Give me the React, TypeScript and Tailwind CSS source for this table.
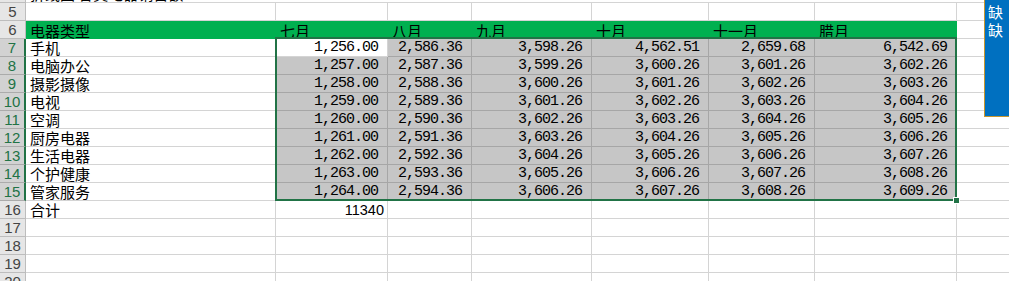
const colW = ['w-[250px]', 'w-[112px]', 'w-[84px]', 'w-[120px]', 'w-[117px]', 'w-[106px]', 'w-[142px]']

const months = ['七月', '八月', '九月', '十月', '十一月', '腊月']

const rows: { n: number; name: string; vals: string[] }[] = [
  { n: 7, name: '手机', vals: ['1,256.00', '2,586.36', '3,598.26', '4,562.51', '2,659.68', '6,542.69'] },
  { n: 8, name: '电脑办公', vals: ['1,257.00', '2,587.36', '3,599.26', '3,600.26', '3,601.26', '3,602.26'] },
  { n: 9, name: '摄影摄像', vals: ['1,258.00', '2,588.36', '3,600.26', '3,601.26', '3,602.26', '3,603.26'] },
  { n: 10, name: '电视', vals: ['1,259.00', '2,589.36', '3,601.26', '3,602.26', '3,603.26', '3,604.26'] },
  { n: 11, name: '空调', vals: ['1,260.00', '2,590.36', '3,602.26', '3,603.26', '3,604.26', '3,605.26'] },
  { n: 12, name: '厨房电器', vals: ['1,261.00', '2,591.36', '3,603.26', '3,604.26', '3,605.26', '3,606.26'] },
  { n: 13, name: '生活电器', vals: ['1,262.00', '2,592.36', '3,604.26', '3,605.26', '3,606.26', '3,607.26'] },
  { n: 14, name: '个护健康', vals: ['1,263.00', '2,593.36', '3,605.26', '3,606.26', '3,607.26', '3,608.26'] },
  { n: 15, name: '管家服务', vals: ['1,264.00', '2,594.36', '3,606.26', '3,607.26', '3,608.26', '3,609.26'] },
]

const cjk = "font-['Noto_Sans_CJK_SC',sans-serif]"
const mono = "font-['Liberation_Mono','Noto_Sans_CJK_SC',monospace]"

function RowHead({ n, active }: { n: number; active?: boolean }) {
  return (
    <div
      className={`w-[26px] h-full shrink-0 flex items-end justify-center pb-px text-[15px] leading-none font-['Liberation_Sans',sans-serif] border-b ${
        active
          ? 'bg-[#d2d2d2] text-[#217346] border-b-[#ababab] border-r-2 border-r-[#217346]'
          : 'bg-[#e6e6e6] text-[#444] border-b-[#bdbdbd] border-r border-r-[#bdbdbd]'
      }`}
    >
      {n}
    </div>
  )
}

function EmptyRow({ n }: { n: number }) {
  return (
    <div className="flex h-[18px]">
      <RowHead n={n} />
      {colW.map((w) => (
        <div key={w} className={`${w} shrink-0 border-r border-b border-[#d4d4d4]`} />
      ))}
      <div className="flex-1 border-b border-[#d4d4d4]" />
    </div>
  )
}

export default function App() {
  return (
    <div className="relative w-[1009px] h-[281px] overflow-hidden bg-white text-black">
      {/* row 4, only its bottom edge shows */}
      <div className="flex h-[3px]">
        <div className="w-[26px] shrink-0 bg-[#e6e6e6] border-r border-b border-[#bdbdbd]" />
        <div className="flex-1 overflow-hidden border-b border-[#d4d4d4]">
          <div className={`${cjk} text-[15px] leading-[16px] -mt-[14px] pl-1 whitespace-nowrap`}>
            折线图 各类电器销售额
          </div>
        </div>
      </div>

      <EmptyRow n={5} />

      {/* row 6: header */}
      <div className="flex h-[18px]">
        <RowHead n={6} />
        <div className={`${colW[0]} shrink-0 bg-[#00b050] flex items-end pl-[4px] ${cjk} text-[15px] leading-[16px]`}>
          电器类型
        </div>
        {months.map((m, i) => (
          <div
            key={m}
            className={`${colW[i + 1]} shrink-0 bg-[#00b050] flex items-end pl-[4px] ${cjk} text-[15px] leading-[16px]`}
          >
            {m}
          </div>
        ))}
        <div className="flex-1 border-b border-[#d4d4d4]" />
      </div>

      {rows.map((r, ri) => (
        <div key={r.n} className="flex h-[18px]">
          <RowHead n={r.n} active />
          <div className={`${colW[0]} shrink-0 border-r border-b border-[#d4d4d4] flex items-end pl-[4px] ${cjk} text-[15px] leading-[16px]`}>
            {r.name}
          </div>
          {r.vals.map((v, ci) => (
            <div
              key={ci}
              className={`${colW[ci + 1]} shrink-0 border-r border-b flex items-end justify-end pr-[9px] pb-[1px] ${mono} text-[15px] leading-none tracking-[-1px] ${
                ri === 0 && ci === 0 ? 'bg-white border-[#d4d4d4]' : 'bg-[#c6c6c6] border-[#a6a6a6]'
              }`}
            >
              {v}
            </div>
          ))}
          <div className="flex-1 border-b border-[#d4d4d4]" />
        </div>
      ))}

      {/* row 16: total */}
      <div className="flex h-[18px]">
        <RowHead n={16} />
        <div className={`${colW[0]} shrink-0 border-r border-b border-[#d4d4d4] flex items-end pl-[4px] ${cjk} text-[15px] leading-[16px]`}>
          合计
        </div>
        <div className={`${colW[1]} shrink-0 border-r border-b border-[#d4d4d4] flex items-end justify-end pr-[3px] pb-[1px] font-['Liberation_Sans',sans-serif] text-[14.5px] leading-none`}>
          11340
        </div>
        {colW.slice(2).map((w) => (
          <div key={w} className={`${w} shrink-0 border-r border-b border-[#d4d4d4]`} />
        ))}
        <div className="flex-1 border-b border-[#d4d4d4]" />
      </div>

      <EmptyRow n={17} />
      <EmptyRow n={18} />
      <EmptyRow n={19} />
      <EmptyRow n={20} />

      {/* selection border over B7:G15 */}
      <div className="absolute left-[275px] top-[37px] w-[682px] h-[164px] border-2 border-[#217346] pointer-events-none" />
      <div className="absolute left-[953px] top-[197px] w-[7px] h-[7px] bg-[#217346] border border-white" />

      {/* floating blue panel */}
      <div className={`absolute left-[984px] top-0 w-[25px] h-[117px] bg-[#0070c0] border-l border-b border-[#c8962e] ${cjk} text-white text-[15px] leading-[18px] pl-[3px] pt-[3px]`}>
        <div>缺</div>
        <div>缺</div>
      </div>
    </div>
  )
}
